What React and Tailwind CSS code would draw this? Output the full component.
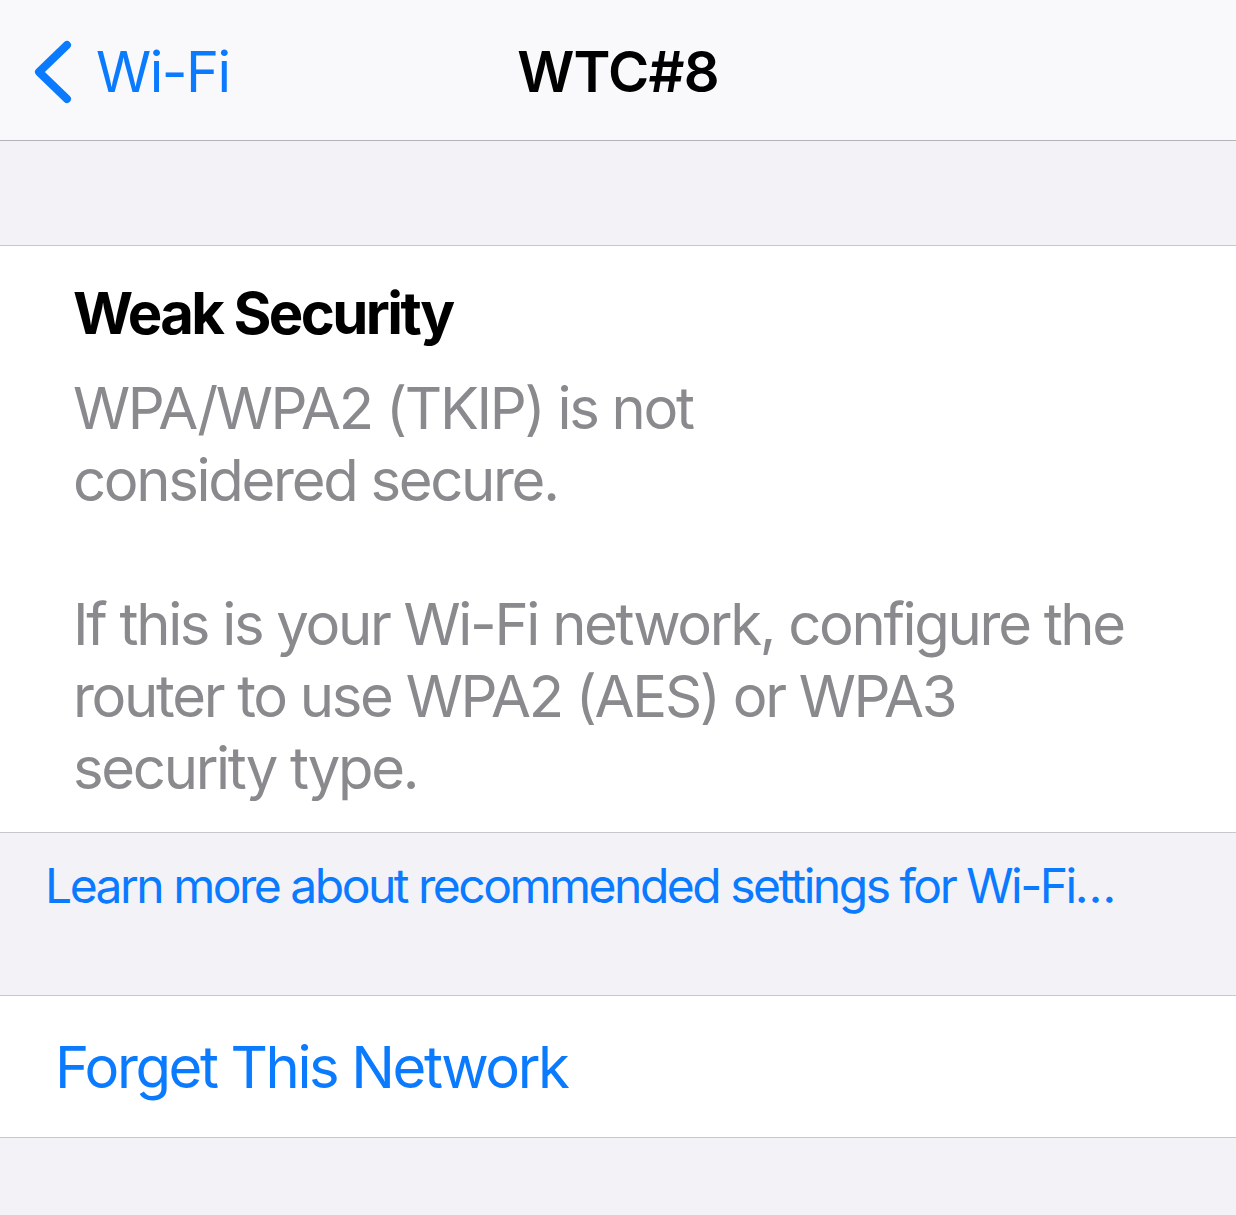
const font = { fontFamily: 'Inter, "Liberation Sans", sans-serif' };

const BODY_LINES = [
  'WPA/WPA2 (TKIP) is not',
  'considered secure.',
  '',
  'If this is your Wi-Fi network, configure the',
  'router to use WPA2 (AES) or WPA3',
  'security type.',
];

const App = () => {
  return (
    <div className="min-h-[1215px] bg-[#f2f2f7]" style={font}>
      <header className="grid grid-cols-[1fr_auto_1fr] items-center h-[141px] pt-[3px] bg-[#f9f9fb] border-b border-[#b4b4b8]">
        <button className="flex items-center text-[#0a7aff] pl-[30px]">
          <svg width="44" height="66" viewBox="0 0 44 66" fill="none">
            <path d="M37 6 L9 33 L37 60" stroke="#0a7aff" strokeWidth="8" strokeLinecap="round" strokeLinejoin="round" />
          </svg>
          <span className="ml-[22px] text-[56px] leading-none tracking-[-1.5px]">Wi-Fi</span>
        </button>
        <h1 className="text-[56px] leading-none font-semibold text-black tracking-[-0.8px]">WTC#8</h1>
        <div />
      </header>

      <div className="h-[105px] border-b border-[#c8c8cc]" />

      <section className="bg-white border-b border-[#c8c8cc] pl-[73px] pt-[31px] pb-[28px]">
        <h2 className="text-[58px] leading-[72px] font-bold text-black tracking-[-2.6px]">Weak Security</h2>
        <div className="mt-[23px] text-[58px] leading-[72px] text-[#8a8a8e] tracking-[-2.3px]">
          {BODY_LINES.map((line, i) => (
            <p key={i} className="whitespace-nowrap h-[72px]">{line}</p>
          ))}
        </div>
      </section>

      <div className="h-[163px] border-b border-[#c8c8cc] pl-[45px] pt-[23px]">
        <a className="whitespace-nowrap text-[48px] leading-[60px] text-[#0a7aff] tracking-[-2.5px]">
          Learn more about recommended settings for Wi-Fi…
        </a>
      </div>

      <div className="h-[142px] bg-white border-b border-[#c8c8cc] pl-[55px] flex items-center">
        <button className="text-[58px] leading-none text-[#0a7aff] tracking-[-2.4px]">Forget This Network</button>
      </div>
    </div>
  );
};

export default App;
